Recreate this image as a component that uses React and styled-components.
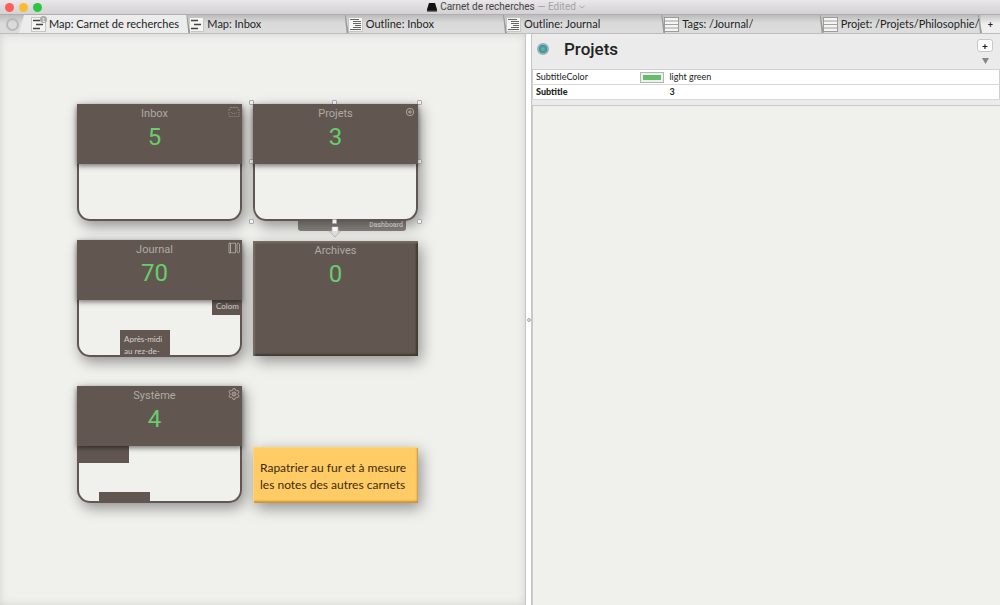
import React from "react";
import styled, { createGlobalStyle } from "styled-components";

const tabs = [
  { label: "Map: Carnet de recherches", kind: "map", active: true },
  { label: "Map: Inbox", kind: "map" },
  { label: "Outline: Inbox", kind: "outline" },
  { label: "Outline: Journal", kind: "outline" },
  { label: "Tags: /Journal/", kind: "list" },
  { label: "Projet: /Projets/Philosophie/", kind: "list" },
];

const notes = [
  { x: 77, y: 70, title: "Inbox", count: 5, badge: "tray", wideBadge: true },
  { x: 253, y: 70, title: "Projets", count: 3, badge: "plus" },
  {
    x: 77,
    y: 206,
    title: "Journal",
    count: 70,
    badge: "book",
    wideBadge: true,
    inner: [
      { x: 133, y: 0, w: 51, h: 15, text: "Colom" },
      { x: 41, y: 30, w: 50, h: 40, text: "Après-midi au rez-de-" },
    ],
  },
  {
    x: 77,
    y: 352,
    title: "Système",
    count: 4,
    badge: "gear",
    wideBadge: true,
    inner: [
      { x: 0, y: 0, w: 50, h: 17 },
      { x: 20, y: 46, w: 51, h: 17 },
    ],
  },
];

const handles = [
  [252, 69], [335, 69], [420, 69],
  [252, 128], [420, 128],
  [252, 188], [335, 188], [420, 188],
];

const TabIcon = ({ kind }) => (
  <svg width="15" height="15" viewBox="0 0 15 15" aria-hidden="true">
    <rect x="0.5" y="0.5" width="14" height="14" fill="#f5f5f3" stroke="#c6c6c6" />
    {kind === "map" && (
      <path d="M2 3.5h7M5 7.5h7M2 11.5h7" stroke="#444" strokeWidth="1.6" />
    )}
    {kind === "outline" && (
      <path
        d="M2 2.5h9M5 4.5h8M5 6.5h8M7 8.5h6M5 10.5h8M2 12.5h11"
        stroke="#555"
        strokeWidth="0.9"
      />
    )}
    {kind === "list" && (
      <path
        d="M0 4h15M0 7.5h15M0 11h15M.5 0v15M14.5 0v15M0 .5h15M0 14.5h15"
        stroke="#979797"
        strokeWidth="0.9"
      />
    )}
  </svg>
);

const BadgeIcon = ({ kind }) => (
  <svg
    width="12"
    height="12"
    viewBox="0 0 12 12"
    fill="none"
    stroke="#b3aca6"
    aria-hidden="true"
  >
    {kind === "tray" && (
      <g strokeWidth="0.8" opacity="0.75">
        <path d="M1 5V4l1.500-2.500h7L11 4v1" strokeDasharray="2.500 0.600" />
        <path d="M1 6v4.500h10V6M3 6l1 1.500h4L9 6" strokeDasharray="1 1" />
      </g>
    )}
    {kind === "plus" && (
      <g strokeWidth="0.9">
        <circle cx="6" cy="6" r="3.700" />
        <path d="M6 3.900v4.200M3.900 6h4.200" strokeWidth="1" />
      </g>
    )}
    {kind === "book" && (
      <g strokeWidth="0.8">
        <path d="M1 1h1.500v10H1zM2.500 1.500l5-.5v10l-5-.5zM9 2l1-1 1.500 1v8l-1 1L9 10z" />
      </g>
    )}
    {kind === "gear" && (
      <g strokeWidth="0.9">
        <path d="M5 .7h2l.4 1.500 1.200.6 1.500-.4 1 1.700-1.100 1.100v1.600l1.100 1.100-1 1.700-1.500-.4-1.200.7L7 11.300H5l-.4-1.400-1.200-.7-1.500.4-1-1.700L2 6.800V5.200L.9 4.100l1-1.700 1.500.4 1.200-.6z" />
        <circle cx="6" cy="6" r="2" />
        <path d="M6 4v4M4 6h4" strokeWidth="0.5" />
      </g>
    )}
  </svg>
);

const App = () => (
  <Window>
    <GlobalStyle />
    <TitleBar>
      <Lights>
        <Light $color="#fb5f57" aria-label="Close" />
        <Light $color="#fabc2e" aria-label="Minimize" />
        <Light $color="#29c740" aria-label="Zoom" />
      </Lights>
      <DocTitle>
        <svg width="10" height="9" viewBox="0 0 10 9" aria-hidden="true">
          <path d="M2 0h6l2 6.500V8.500H0V6.500z" fill="#111" />
          <path d="M0 7.500h10" stroke="#444" strokeWidth="0.6" />
        </svg>
        <span>Carnet de recherches</span>
        <Edited>— Edited</Edited>
        <svg width="6" height="4" viewBox="0 0 6 4" aria-hidden="true">
          <path d="M.5 .7L3 3 5.500.7" fill="none" stroke="#aaa" />
        </svg>
      </DocTitle>
    </TitleBar>

    <TabBar>
      <Ring aria-label="All tabs" />
      {tabs.map((tab) => (
        <Tab key={tab.label} $active={tab.active}>
          <TabIcon kind={tab.kind} />
          {tab.active && <TabBadge>1</TabBadge>}
          <TabLabel>{tab.label}</TabLabel>
        </Tab>
      ))}
      <NewTab aria-label="New tab">+</NewTab>
    </TabBar>

    <Panes>
      <MapView>
        <Stub>Dashboard</Stub>
        {notes.map((note) => (
          <Note key={note.title} $x={note.x} $y={note.y}>
            <NoteHead $wideBadge={note.wideBadge}>
              <NoteTitle>{note.title}</NoteTitle>
              <Count>{note.count}</Count>
              <Badge>
                <BadgeIcon kind={note.badge} />
              </Badge>
            </NoteHead>
            <NoteBody>
              {(note.inner || []).map((child) => (
                <Child
                  key={child.x}
                  $x={child.x}
                  $y={child.y}
                  $w={child.w}
                  $h={child.h}
                >
                  {child.text}
                </Child>
              ))}
            </NoteBody>
          </Note>
        ))}
        <Archive $x={253} $y={207}>
          <NoteTitle>Archives</NoteTitle>
          <Count>0</Count>
        </Archive>
        <Sticky $x={253} $y={413}>
          Rapatrier au fur et à mesure les notes des autres carnets
        </Sticky>
        {handles.map(([x, y]) => (
          <Handle key={`${x}-${y}`} $x={x} $y={y} />
        ))}
        <LinkArrow width="12" height="12" viewBox="0 0 12 12" aria-hidden="true">
          <path d="M3 1h6v4h2.500L6 11 .5 5H3z" fill="#ddd" stroke="#aaa" strokeWidth="0.8" />
          <path d="M3.500 1h5v4h-5z" fill="#f6f6f6" />
        </LinkArrow>
      </MapView>

      <Divider>
        <Grip />
      </Divider>

      <Inspector>
        <InspectorHead>
          <Orb aria-hidden="true" />
          <Heading>Projets</Heading>
          <HeadActions>
            <AddButton aria-label="Add attribute">+</AddButton>
            <svg width="7" height="6" viewBox="0 0 7 6" aria-hidden="true">
              <path d="M0 0h7L3.500 6z" fill="#868686" />
            </svg>
          </HeadActions>
        </InspectorHead>
        <Attributes>
          <tbody>
            <tr>
              <NameCell scope="row">SubtitleColor</NameCell>
              <SwatchCell>
                <Swatch aria-label="Pick color" />
              </SwatchCell>
              <td>light green</td>
            </tr>
            <tr>
              <NameCell scope="row" $bold>
                Subtitle
              </NameCell>
              <SwatchCell />
              <ValueCell>3</ValueCell>
            </tr>
          </tbody>
        </Attributes>
        <NoteText aria-label="Note text" />
      </Inspector>
    </Panes>
  </Window>
);

const GlobalStyle = createGlobalStyle`
  * {
    box-sizing: border-box;
  }
  body {
    margin: 0;
    font-family: Lato, "Open Sans", sans-serif;
    color: #222;
  }
  button {
    padding: 0;
    border: 0;
    font: inherit;
    color: inherit;
    background: none;
  }
`;

const Window = styled.div`
  display: flex;
  flex-direction: column;
  min-height: 100vh;
  background: #f0f1ed;
`;

const TitleBar = styled.header`
  display: grid;
  grid-template-columns: 1fr auto 1fr;
  align-items: center;
  height: 15px;
  background: linear-gradient(#e9e7e9, #d3d1d3);
  border-bottom: 1px solid #b0aeb0;
`;

const Lights = styled.div`
  display: flex;
  gap: 5px;
  padding-left: 5px;
`;

const Light = styled.button`
  width: 9px;
  height: 9px;
  border-radius: 50%;
  background: ${(props) => props.$color};
`;

const DocTitle = styled.div`
  display: flex;
  align-items: center;
  gap: 3px;
  padding-left: 12px;
  font: 10px/14px Roboto, sans-serif;
  color: #444;
`;

const Edited = styled.span`
  color: #a5a3a5;
`;

const TabBar = styled.nav`
  display: flex;
  height: 19px;
  background: linear-gradient(#bcbcbc, #dadada 8px, #dcdcdc);
  border-bottom: 1px solid #bdbdbd;
`;

const Ring = styled.button`
  flex: none;
  align-self: center;
  width: 13px;
  height: 13px;
  margin: 0 12px 0 6px;
  border: 2px solid #b9b9b9;
  border-radius: 50%;
`;

const Tab = styled.button`
  position: relative;
  z-index: ${(props) => (props.$active ? 1 : 0)};
  display: flex;
  align-items: center;
  gap: 3px;
  flex: 1;
  min-width: 0;
  text-align: left;

  svg {
    flex: none;
  }

  &::before {
    content: "";
    position: absolute;
    z-index: -1;
    inset: 0 -2px 0 -12px;
    background: ${(props) => (props.$active ? "#ececec" : "none")};
    clip-path: polygon(5px 0, calc(100% - 4px) 0, 100% 100%, 0 100%);
  }

  &::after {
    content: "";
    position: absolute;
    z-index: -1;
    top: 0;
    right: -1px;
    width: 4px;
    height: 100%;
    background: #999;
    clip-path: polygon(0 0, 1px 0, 100% 100%, 2px 100%);
  }
`;

const TabBadge = styled.span`
  position: absolute;
  left: 9px;
  top: 1px;
  width: 7px;
  height: 7px;
  border-radius: 50%;
  background: #aaa;
  color: #fff;
  font-size: 6px;
  line-height: 7px;
  text-align: center;
`;

const TabLabel = styled.span`
  overflow: hidden;
  font-size: 11px;
  line-height: 16px;
  white-space: nowrap;
`;

const NewTab = styled.button`
  flex: none;
  width: 19px;
  font-size: 9px;
  font-weight: 700;
  background: linear-gradient(#c8c8c8, #efefef 9px);
`;

const Panes = styled.main`
  display: flex;
  flex: 1;
`;

/* free canvas, notes keep the spot where they were dropped */
const MapView = styled.section`
  position: relative;
  flex: 525;
  min-width: 430px;
  min-height: 500px;
  overflow: hidden;
  box-shadow: inset 0 0 8px #d0d1cd;
`;

const Placed = styled.div`
  position: absolute;
  left: ${(props) => props.$x}px;
  top: ${(props) => props.$y}px;
`;

const Note = styled(Placed)`
  width: 165px;
  border-radius: 0 0 13px 13px;
  background: #f0f1ed;
  box-shadow: 3px 5px 14px rgba(0, 0, 0, 0.4);
`;

const NoteHead = styled.div`
  position: relative;
  z-index: 1;
  height: 60px;
  padding-right: ${(props) => (props.$wideBadge ? 10 : 0)}px;
  background: #615750;
  box-shadow: 0 2px 5px rgba(0, 0, 0, 0.5);
`;

const NoteTitle = styled.div`
  padding-top: 2px;
  font: 11px/16px Roboto, sans-serif;
  text-align: center;
  color: #b0aaa4;
`;

const Count = styled.div`
  font: 24px/30px Roboto, sans-serif;
  text-align: center;
  color: #69cd6b;
`;

const Badge = styled.span`
  position: absolute;
  top: 2px;
  right: 2px;
  display: flex;
`;

const NoteBody = styled.div`
  position: relative;
  height: 57px;
  overflow: hidden;
  border: 2px solid #615750;
  border-top: 0;
  border-radius: 0 0 13px 13px;
`;

const Child = styled(Placed)`
  width: ${(props) => props.$w}px;
  height: ${(props) => props.$h}px;
  padding: 3px 4px;
  overflow: hidden;
  background: #615750;
  color: #d5d1cc;
  font-size: 8px;
  line-height: 12px;

  &:first-child {
    padding-top: 0;
  }
`;

const Archive = styled(Placed)`
  width: 165px;
  height: 115px;
  background: #615750;
  box-shadow: inset 2px 2px 2px #776d64, inset -2px -2px 2px #443930,
    3px 5px 14px rgba(0, 0, 0, 0.4);
`;

const Sticky = styled(Placed)`
  display: flex;
  align-items: center;
  width: 165px;
  height: 56px;
  padding: 2px 4px 0 7px;
  background: #ffcb65;
  box-shadow: inset 1px 1px 1px #ffd47c, inset -1px -2px 2px #c99339,
    3px 5px 14px rgba(0, 0, 0, 0.4);
  color: #3c2a10;
  font-size: 12px;
  line-height: 17px;
`;

const Stub = styled.div`
  position: absolute;
  left: 298px;
  top: 180px;
  width: 108px;
  height: 17px;
  padding: 6px 3px 0;
  border-radius: 3px;
  background: #8d8883;
  color: #f1f0ed;
  font: 500 7px/10px Roboto, sans-serif;
  text-align: right;
`;

const Handle = styled(Placed)`
  width: 5px;
  height: 5px;
  margin: -3px 0 0 -3px;
  border: 1px solid #aaa;
  border-radius: 1px;
  background: #f3f3f3;
`;

const LinkArrow = styled.svg`
  position: absolute;
  left: 329px;
  top: 192px;
`;

const Divider = styled.div`
  display: flex;
  flex: none;
  align-items: center;
  justify-content: center;
  width: 7px;
  border: 1px solid #c6c6c6;
  border-width: 0 1px;
  background: #fff;
`;

const Grip = styled.span`
  width: 4px;
  height: 4px;
  border: 1px solid #aaa;
  border-radius: 50%;
  background: #ddd;
`;

const Inspector = styled.aside`
  display: flex;
  flex: 468;
  flex-direction: column;
  min-width: 0;
  background: #ebebeb;
`;

const InspectorHead = styled.div`
  display: flex;
  align-items: center;
  height: 35px;
  padding: 0 7px 0 5px;
`;

const Orb = styled.span`
  width: 12px;
  height: 12px;
  margin: 0 15px 5px 0;
  border: 2px solid #93b3b3;
  border-radius: 50%;
  background: radial-gradient(#62bcbd, #287b80);
`;

const Heading = styled.h1`
  flex: 1;
  margin: 0 0 5px;
  font: 500 17px/22px Roboto, sans-serif;
`;

const HeadActions = styled.div`
  display: flex;
  flex-direction: column;
  align-items: center;
  gap: 6px;
`;

const AddButton = styled.button`
  width: 16px;
  height: 13px;
  border: 1px solid #c8c8c8;
  border-radius: 3px;
  background: #fff;
  font-size: 10px;
  font-weight: 900;
  line-height: 10px;
`;

const Attributes = styled.table`
  width: 100%;
  border-collapse: collapse;
  border: 1px solid #cfcfcf;
  background: #fff;
  font-size: 9px;
  line-height: 14px;
  table-layout: fixed;

  tr {
    height: 15px;
    border-bottom: 1px solid #d8d8d8;
  }

  td {
    padding: 0;
  }
`;

const NameCell = styled.th`
  width: 107px;
  padding: 0 0 0 3px;
  text-align: left;
  font-weight: ${(props) => (props.$bold ? 900 : 400)};
`;

const SwatchCell = styled.td`
  width: 30px;
`;

const Swatch = styled.button`
  display: block;
  width: 24px;
  height: 11px;
  border: 1px solid #b5b5b5;
  background: #66bd69;
  box-shadow: inset 0 0 0 2px #eee;
`;

const ValueCell = styled.td`
  font-weight: 700;
`;

const NoteText = styled.textarea`
  flex: 1;
  margin: 5px 0 0;
  padding: 8px;
  border: 1px solid #cacaca;
  border-width: 1px 0 0 1px;
  outline: 0;
  resize: none;
  background: #f0f1ed;
  font: 12px/17px Lato, sans-serif;
`;

export default App;
